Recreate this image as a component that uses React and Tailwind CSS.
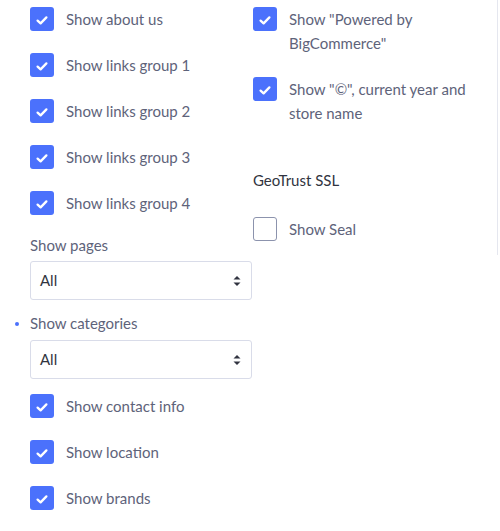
import React from 'react';

const FONT = { fontFamily: 'Lato, "Source Sans Pro", "Liberation Sans", sans-serif' };

function Checkbox({ checked }) {
  if (!checked) {
    return <div className="w-6 h-6 shrink-0 rounded-[3px] border border-[#8c93ad] bg-white" />;
  }
  return (
    <div className="w-6 h-6 shrink-0 rounded-[3px] bg-[#4b71fc] flex items-center justify-center">
      <svg width="24" height="24" viewBox="0 0 24 24" fill="none">
        <path d="M7.6 13.6 L10.6 16.4 L16.4 10.4" stroke="#fff" strokeWidth="2.3" strokeLinecap="round" strokeLinejoin="round" />
      </svg>
    </div>
  );
}

function CheckRow({ label, checked = true }) {
  return (
    <div className="flex items-start gap-3">
      <Checkbox checked={checked} />
      <span className="text-[15px] leading-6 text-[#5e637a]">{label}</span>
    </div>
  );
}

function Select({ value }) {
  return (
    <div className="h-[39px] w-[222px] rounded-[3px] border border-[#d9dce9] bg-white flex items-center justify-between pl-[9px] pr-[10px]">
      <span className="text-[15px] text-[#313440]">{value}</span>
      <svg width="8" height="14" viewBox="0 0 8 14">
        <path d="M0.5 5.5 L4 2 L7.5 5.5 Z" fill="#313440" />
        <path d="M0.5 8.5 L4 12 L7.5 8.5 Z" fill="#313440" />
      </svg>
    </div>
  );
}

export default function App() {
  return (
    <div className="w-[500px] h-[531px] bg-white flex" style={FONT}>
      {/* left column */}
      <div className="w-[252px] pl-[30px] pt-[7px] flex flex-col">
        <div className="flex flex-col gap-[22px]">
          <CheckRow label="Show about us" />
          <CheckRow label="Show links group 1" />
          <CheckRow label="Show links group 2" />
          <CheckRow label="Show links group 3" />
          <CheckRow label="Show links group 4" />
        </div>
        <div className="mt-[18px] text-[15px] leading-6 text-[#5e637a]">Show pages</div>
        <div className="mt-[4px]">
          <Select value="All" />
        </div>
        <div className="relative mt-[11px] text-[15px] leading-6 text-[#5e637a]">
          <span className="absolute left-[-15px] top-[11px] w-1 h-1 rounded-full bg-[#4b71fc]" />
          Show categories
        </div>
        <div className="mt-[5px]">
          <Select value="All" />
        </div>
        <div className="mt-[15px] flex flex-col gap-[22px]">
          <CheckRow label="Show contact info" />
          <CheckRow label="Show location" />
          <CheckRow label="Show brands" />
        </div>
      </div>

      {/* right column */}
      <div className="ml-px w-[245px] self-start border-r border-[#e5e7ef] pt-[7px] pb-[14px] flex flex-col">
        <div className="flex flex-col gap-[22px]">
          <CheckRow label={<>Show "Powered by<br />BigCommerce"</>} />
          <CheckRow label={<>Show "©", current year and<br />store name</>} />
        </div>
        <div className="mt-[43px] text-[15px] leading-6 text-[#313440]">GeoTrust SSL</div>
        <div className="mt-[25px]">
          <CheckRow label="Show Seal" checked={false} />
        </div>
      </div>
    </div>
  );
}
